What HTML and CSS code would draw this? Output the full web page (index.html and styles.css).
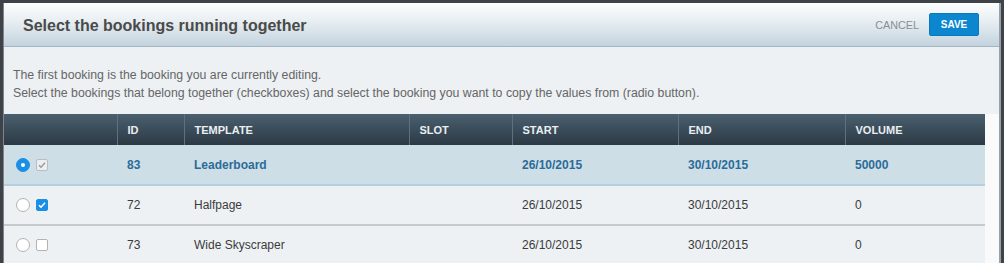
FILE: index.html
```html
<!DOCTYPE html>
<html lang="en">
<head>
    <meta charset="UTF-8">
    <title>Select bookings</title>
    <link rel="stylesheet" href="styles.css">
</head>
<body>
    <div class="dialog">
        <div class="dialog-header">
            <h1>Select the bookings running together</h1>
            <div class="actions">
                <button class="btn-cancel">CANCEL</button>
                <button class="btn-save">SAVE</button>
            </div>
        </div>

        <div class="intro">
            <p>The first booking is the booking you are currently editing.</p>
            <p>Select the bookings that belong together (checkboxes) and select the booking you want to copy the values from (radio button).</p>
        </div>

        <div class="grid-wrap">
            <table class="bookings">
                <colgroup>
                    <col style="width:113px">
                    <col style="width:67px">
                    <col style="width:225px">
                    <col style="width:103px">
                    <col style="width:166px">
                    <col style="width:167px">
                    <col style="width:140px">
                </colgroup>
                <thead>
                    <tr>
                        <th></th>
                        <th>ID</th>
                        <th>Template</th>
                        <th>Slot</th>
                        <th>Start</th>
                        <th>End</th>
                        <th>Volume</th>
                    </tr>
                </thead>
                <tbody>
                    <tr class="current">
                        <td class="pick">
                            <span class="radio on"></span>
                            <span class="check locked">
                                <svg viewBox="0 0 12 12" width="12" height="12"><path d="M3 6.2 L5 8.2 L9 3.8" fill="none" stroke="#9a9a9a" stroke-width="1.4"/></svg>
                            </span>
                        </td>
                        <td>83</td>
                        <td>Leaderboard</td>
                        <td></td>
                        <td>26/10/2015</td>
                        <td>30/10/2015</td>
                        <td>50000</td>
                    </tr>
                    <tr>
                        <td class="pick">
                            <span class="radio"></span>
                            <span class="check on">
                                <svg viewBox="0 0 12 12" width="12" height="12"><path d="M3 6.2 L5 8.2 L9 3.8" fill="none" stroke="#fff" stroke-width="1.6"/></svg>
                            </span>
                        </td>
                        <td>72</td>
                        <td>Halfpage</td>
                        <td></td>
                        <td>26/10/2015</td>
                        <td>30/10/2015</td>
                        <td>0</td>
                    </tr>
                    <tr>
                        <td class="pick">
                            <span class="radio"></span>
                            <span class="check"></span>
                        </td>
                        <td>73</td>
                        <td>Wide Skyscraper</td>
                        <td></td>
                        <td>26/10/2015</td>
                        <td>30/10/2015</td>
                        <td>0</td>
                    </tr>
                </tbody>
            </table>
            <div class="scroll-track"></div>
        </div>
    </div>
</body>
</html>
```

FILE: styles.css
```css
html, body {
    margin: 0;
    height: 263px;
    overflow: hidden;
}

body {
    background-color: #3d4348;
    padding: 3px 3px 0 3px;
    font-family: "Liberation Sans", Arial, sans-serif;
}

.dialog {
    height: 260px;
    background-color: #edf1f4;
    border-left: 1px solid #7e868c;
    border-right: 2px solid #9aa1a6;
    overflow: hidden;
}

.dialog-header {
    display: flex;
    align-items: center;
    justify-content: space-between;
    height: 43px;
    padding: 0 20px 0 19px;
    background: linear-gradient(#fdfefe, #e6edf1 45%, #c3d3de);
    border-bottom: 1px solid #a2b5c3;
}

.dialog-header h1 {
    margin: 0;
    font-size: 16px;
    font-weight: bold;
    color: #4a4a4a;
    padding-top: 2px;
}

.actions {
    display: flex;
    align-items: center;
    gap: 10px;
}

.btn-cancel {
    background: none;
    border: none;
    padding: 0;
    font-family: inherit;
    font-size: 10.8px;
    color: #8a8f93;
    cursor: pointer;
}

.btn-save {
    width: 50px;
    height: 23px;
    background-color: #0b86cf;
    border: 1px solid #0a78ba;
    border-radius: 2px;
    color: #fff;
    font-family: inherit;
    font-size: 10px;
    font-weight: bold;
    cursor: pointer;
}

.intro {
    padding: 19px 9px 12px;
    font-family: "Liberation Sans Narrow", "Liberation Sans", sans-serif;
    font-size: 12.3px;
    color: #666;
}

.intro p {
    margin: 0;
    line-height: 18px;
}

.grid-wrap {
    display: flex;
}

.scroll-track {
    flex: 1;
    background-color: #fafafa;
}

.bookings {
    width: 981px;
    table-layout: fixed;
    border-collapse: collapse;
    font-size: 12px;
}

.bookings th {
    height: 31px;
    padding: 0 10px;
    text-align: left;
    font-size: 11px;
    font-weight: bold;
    text-transform: uppercase;
    color: #e9eef2;
    background: linear-gradient(#4b606f, #2b3944);
    border-left: 1px solid #5d7180;
}

.bookings th:first-child {
    border-left: none;
}

.bookings td {
    height: 38px;
    padding: 0 10px;
    color: #3b3b3b;
    border-bottom: 2px solid #c5cacd;
}

.bookings tr.current td {
    height: 39px;
    background-color: #cedee7;
    color: #2a6c97;
    font-weight: bold;
    border-bottom-color: #b4cfdf;
}

.bookings td.pick {
    padding-left: 12px;
}

.radio,
.check {
    display: inline-block;
    vertical-align: middle;
    box-sizing: border-box;
    background-color: #fff;
}

.radio {
    width: 14px;
    height: 14px;
    border: 1px solid #b3b3b3;
    border-radius: 50%;
    margin-right: 3px;
    position: relative;
}

.radio.on {
    background-color: #1b8fe6;
    border-color: #1b8fe6;
}

.radio.on::after {
    content: "";
    position: absolute;
    left: 4px;
    top: 4px;
    width: 4px;
    height: 4px;
    border-radius: 50%;
    background-color: #fff;
}

.check {
    width: 12px;
    height: 12px;
    border: 1px solid #b3b3b3;
    border-radius: 2px;
    line-height: 0;
}

.check svg {
    margin: -1px 0 0 -1px;
}

.check.on {
    background-color: #1b8fe6;
    border-color: #1b8fe6;
}

.check.locked {
    background-color: #eceff1;
    border-color: #bcbcbc;
}
```
